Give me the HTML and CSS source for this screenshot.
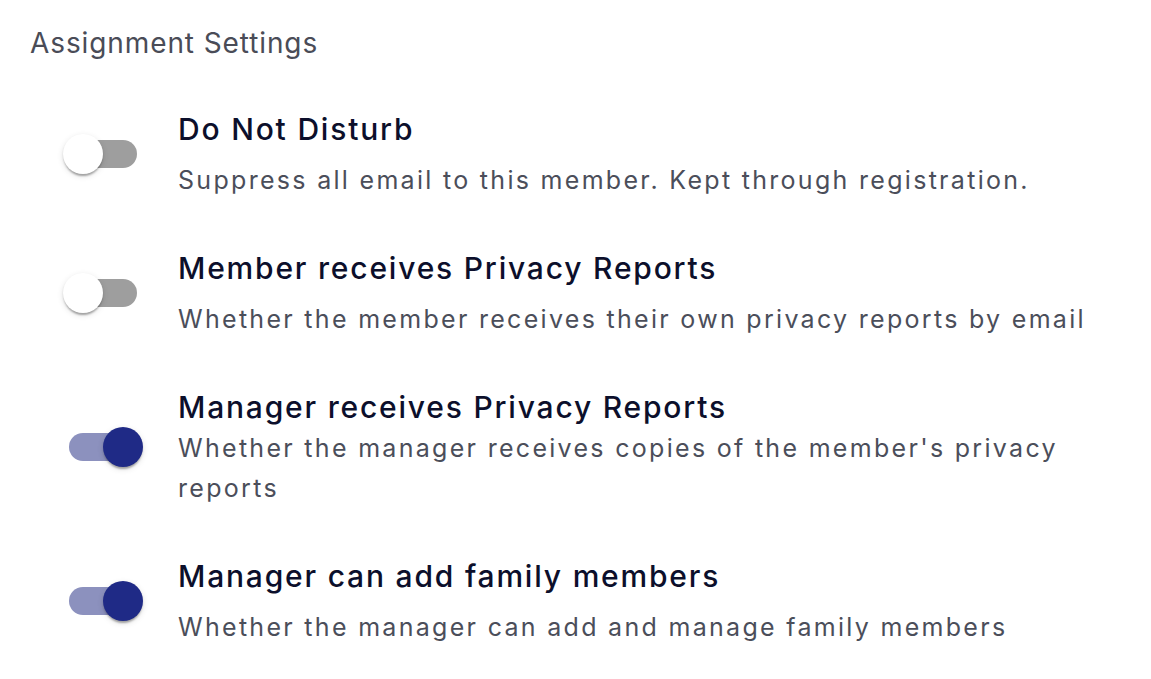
FILE: index.html
```html
<!DOCTYPE html>
<html lang="en">
<head>
  <meta charset="UTF-8" />
  <meta name="viewport" content="width=device-width, initial-scale=1" />
  <title>Assignment Settings</title>
  <link rel="stylesheet" href="styles.css">
</head>
<body>
  <div class="settings">
    <h3 class="settings-title">Assignment Settings</h3>

    <div class="setting">
      <span class="switch"><span class="switch-track"></span><span class="switch-thumb"></span></span>
      <div class="setting-text">
        <div class="setting-label">Do Not Disturb</div>
        <div class="setting-desc">Suppress all email to this member. Kept through registration.</div>
      </div>
    </div>

    <div class="setting">
      <span class="switch"><span class="switch-track"></span><span class="switch-thumb"></span></span>
      <div class="setting-text">
        <div class="setting-label">Member receives Privacy Reports</div>
        <div class="setting-desc">Whether the member receives their own privacy reports by email</div>
      </div>
    </div>

    <div class="setting">
      <span class="switch on"><span class="switch-track"></span><span class="switch-thumb"></span></span>
      <div class="setting-text">
        <div class="setting-label">Manager receives Privacy Reports</div>
        <div class="setting-desc">Whether the manager receives copies of the member's privacy reports</div>
      </div>
    </div>

    <div class="setting">
      <span class="switch on"><span class="switch-track"></span><span class="switch-thumb"></span></span>
      <div class="setting-text">
        <div class="setting-label">Manager can add family members</div>
        <div class="setting-desc">Whether the manager can add and manage family members</div>
      </div>
    </div>
  </div>
</body>
</html>
```

FILE: styles.css
```css
html, body {
  margin: 0;
  padding: 0;
  background: #ffffff;
  font-family: Inter, 'Open Sans', sans-serif;
}

.settings {
  padding: 23px 30px 0 30px;
  display: flex;
  flex-direction: column;
  gap: 47px;
}

.settings-title {
  margin: 0 0 -2px;
  font-size: 28px;
  line-height: 40px;
  font-weight: 400;
  color: #4a4c57;
  letter-spacing: 0.9px;
}

.setting {
  display: flex;
  align-items: center;
}

/* переключатель */
.switch {
  position: relative;
  flex: none;
  width: 80px;
  height: 40px;
  margin-left: 33px;
}

.switch-track {
  position: absolute;
  left: 6px;
  top: 6px;
  width: 68px;
  height: 28px;
  border-radius: 14px;
  background: #9e9e9e;
}

.switch-thumb {
  position: absolute;
  left: 0;
  top: 0;
  width: 40px;
  height: 40px;
  border-radius: 50%;
  background: #ffffff;
  box-shadow: 0 4px 2px -2px rgba(0, 0, 0, 0.2), 0 2px 2px rgba(0, 0, 0, 0.14), 0 2px 6px rgba(0, 0, 0, 0.12);
}

.switch.on .switch-track {
  background: #8c91be;
}

.switch.on .switch-thumb {
  left: 40px;
  background: #1f2a86;
}

.setting-text {
  margin-left: 35px;
  min-height: 92px;
  display: flex;
  flex-direction: column;
  justify-content: space-between;
  max-width: 943px;
}

.setting-label {
  font-size: 30px;
  line-height: 42px;
  font-weight: 500;
  color: #0c0f2b;
  letter-spacing: 1.8px;
}

.setting-desc {
  font-size: 25px;
  line-height: 40px;
  color: #4b4e5a;
  letter-spacing: 2.3px;
}
```
